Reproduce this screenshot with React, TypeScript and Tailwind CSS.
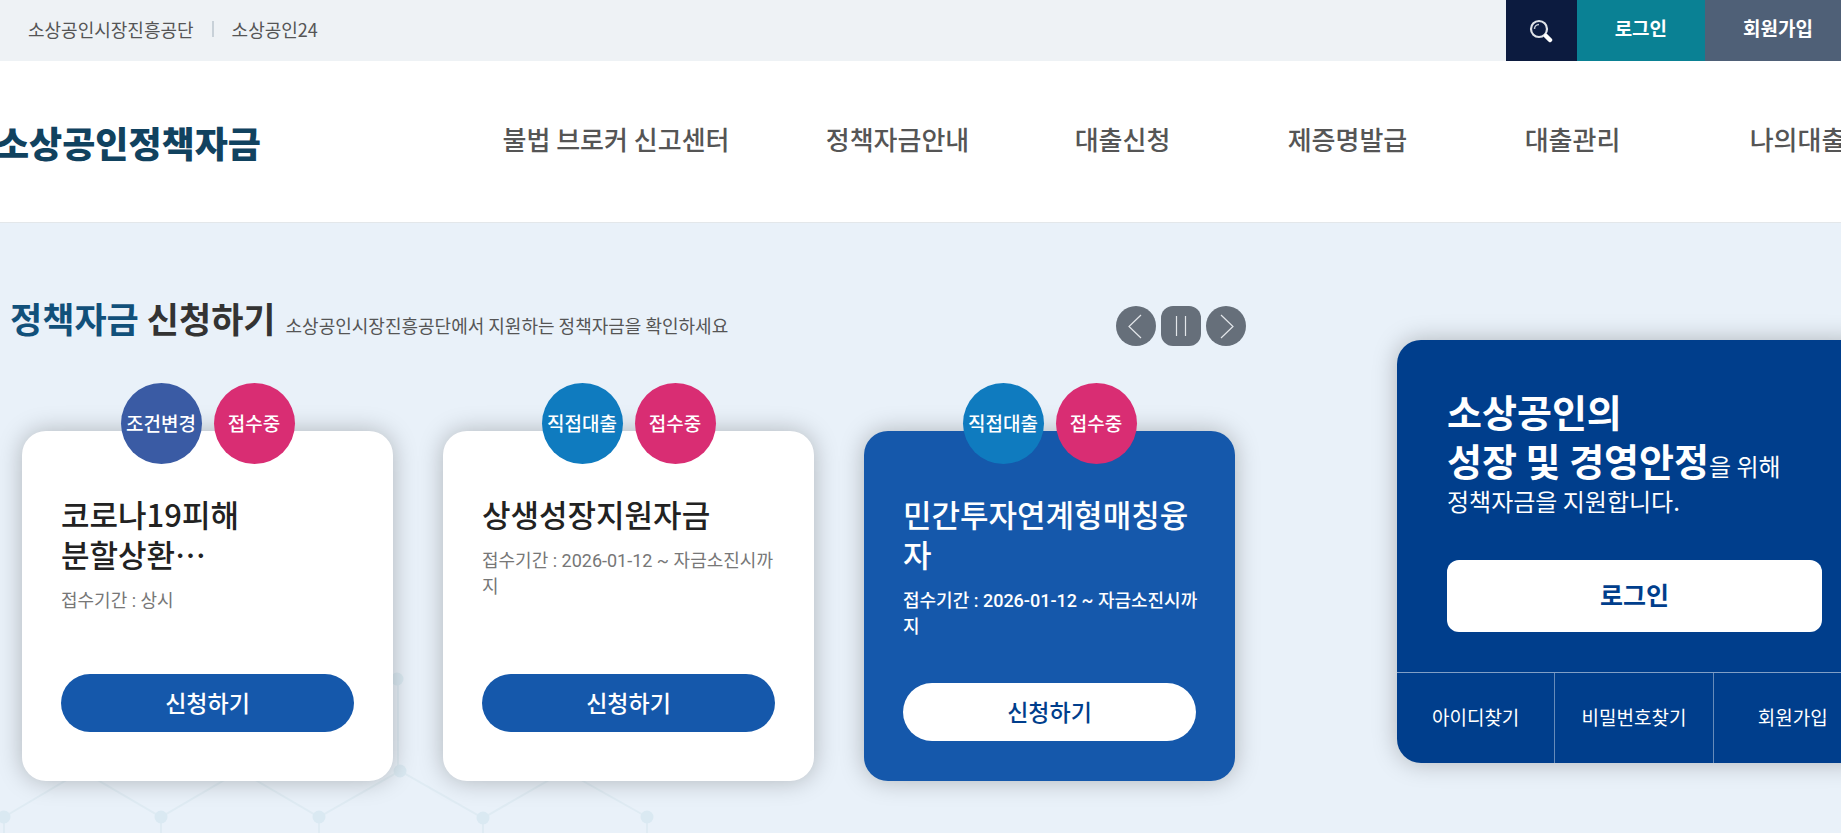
type Loan = {
  type: string
  typeClass: string
  title: string
  period: string
  active?: boolean
}

const menus = ['불법 브로커 신고센터', '정책자금안내', '대출신청', '제증명발급', '대출관리', '나의대출']

const loans: Loan[] = [
  {
    type: '조건변경',
    typeClass: 'bg-[#3a5ba4]',
    title: '코로나19피해\n분할상환…',
    period: '접수기간 : 상시',
  },
  {
    type: '직접대출',
    typeClass: 'bg-[#0f7bbf]',
    title: '상생성장지원자금',
    period: '접수기간 : 2026-01-12 ~ 자금소진시까지',
  },
  {
    type: '직접대출',
    typeClass: 'bg-[#0f7bbf]',
    title: '민간투자연계형매칭융자',
    period: '접수기간 : 2026-01-12 ~ 자금소진시까지',
    active: true,
  },
]

export default function App() {
  return (
    <div className="min-h-screen overflow-hidden bg-[#e9f1f9] font-['Noto_Sans_CJK_KR',sans-serif] text-[#333]">
      <TopBar />
      <Header />
      <main className="relative min-h-[calc(100vh-223px)] overflow-hidden">
        <Pattern />
        <div className="relative -mr-[31px] flex items-start">
          <ApplySection />
          <LoginPanel />
        </div>
      </main>
    </div>
  )
}

function TopBar() {
  return (
    <div className="flex h-[61px] items-stretch justify-between bg-[#eef2f5]">
      <div className="flex items-center gap-[18px] pb-1 pl-7 text-lg text-[#555]">
        <a href="#semas">소상공인시장진흥공단</a>
        <span className="h-4 w-0.5 bg-[#c8d1d8]" />
        <a href="#sbiz24">소상공인24</a>
      </div>
      <div className="flex text-[19px] font-bold text-white">
        <button aria-label="검색" className="flex w-[71px] items-center justify-center bg-[#0c1b3f]">
          <svg width="24" height="24" viewBox="0 0 24 24" fill="none">
            <circle cx="10" cy="10" r="8" stroke="#dfe3e8" strokeWidth="2.200" />
            <path d="M5.500 10a4.500 4.500 0 0 1 4.500-4.500" stroke="#c3c9d3" strokeWidth="1.500" />
            <path d="M17 17l4 4" stroke="#fff" strokeWidth="4.500" strokeLinecap="round" />
          </svg>
        </button>
        <button className="bg-[#0a8194] px-[38px] pb-1">로그인</button>
        <button className="bg-[#4f6077] pr-7 pb-1 pl-[38px]">회원가입</button>
      </div>
    </div>
  )
}

function Header() {
  return (
    <header className="flex h-[162px] border-b border-[#e3e7ea] bg-white">
      <h1 className="-ml-1 flex w-[451px] shrink-0 items-center text-4xl font-black text-[#11425f]">
        <a href="#home">소상공인정책자금</a>
      </h1>
      <nav className="grid shrink-0 grid-cols-[338px_repeat(5,225px)] items-center pb-1.5 text-center text-[26px] font-medium text-[#555]">
        {menus.map((menu) => (
          <a key={menu} href="#menu">
            {menu}
          </a>
        ))}
      </nav>
    </header>
  )
}

function ApplySection() {
  return (
    <section className="min-w-0 flex-1 pt-[71px] pb-12">
      <div className="flex items-end justify-between pl-2.5">
        <div className="flex items-baseline gap-2.5 pb-1">
          <h2 className="text-[35px] leading-[48px] font-bold">
            <span className="text-[#11507a]">정책자금</span> 신청하기
          </h2>
          <p className="text-lg text-[#555]">
            소상공인시장진흥공단에서 지원하는 정책자금을 확인하세요
          </p>
        </div>
        <div className="flex gap-[5px]">
          <ControlButton label="이전" path="M25 9L13 20.500L25 32" />
          <ControlButton label="정지" path="M15.500 10V30M24.500 10V30" square />
          <ControlButton label="다음" path="M15 9L27 20.500L15 32" />
        </div>
      </div>
      <div className="mt-[85px] grid grid-cols-3 gap-[50px] pr-[11px] pl-[22px]">
        {loans.map((loan) => (
          <LoanCard key={loan.title} loan={loan} />
        ))}
      </div>
    </section>
  )
}

function ControlButton({ label, path, square }: { label: string; path: string; square?: boolean }) {
  return (
    <button aria-label={label} className={`size-10 bg-[#666f7a] ${square ? 'rounded-xl' : 'rounded-full'}`}>
      <svg width="40" height="40" viewBox="0 0 40 40" fill="none" stroke="#e3e6ea" strokeWidth="1.200">
        <path d={path} />
      </svg>
    </button>
  )
}

function LoanCard({ loan }: { loan: Loan }) {
  const { type, typeClass, title, period, active } = loan

  return (
    <article
      className={`relative flex flex-col rounded-3xl px-[39px] pt-[63px] pb-10 shadow-[0_0_25px_rgba(0,0,0,0.25)] ${
        active ? 'bg-[#1558ab] text-white' : 'bg-white text-[#222]'
      }`}
    >
      <div className="absolute inset-x-0 -top-12 flex justify-center gap-3 text-[19px] font-medium text-white">
        <span className={`flex size-[81px] items-center justify-center rounded-full ${typeClass}`}>{type}</span>
        <span className="flex size-[81px] items-center justify-center rounded-full bg-[#d92d73]">접수중</span>
      </div>
      <div className="min-h-[137px]">
        <h3 className="text-[31px] leading-10 font-medium whitespace-pre-line">{title}</h3>
        <p
          className={`mt-3.5 -mr-1 font-[Roboto,'Noto_Sans_CJK_KR',sans-serif] text-lg leading-[26px] ${
            active ? 'font-medium' : 'text-[#777]'
          }`}
        >
          {period}
        </p>
      </div>
      <button
        className={`mt-[43px] h-[58px] w-full rounded-full pb-0.5 text-[23px] font-medium ${
          active ? 'bg-white text-[#003e8c]' : 'bg-[#1558ab] text-white'
        }`}
      >
        신청하기
      </button>
    </article>
  )
}

function LoginPanel() {
  return (
    <aside className="mt-[117px] ml-[151px] w-[475px] shrink-0 rounded-3xl bg-[#003e8c] text-white shadow-[0_0_25px_rgba(0,0,0,0.25)]">
      <div className="px-[50px] pt-[46px] pb-10">
        <p className="text-2xl leading-[34px]">
          <strong className="text-[38px] leading-[49px] font-bold">
            소상공인의
            <br />
            성장 및 경영안정
          </strong>
          을 위해
          <br />
          정책자금을 지원합니다.
        </p>
        <button className="mt-[42px] h-[72px] w-full rounded-xl bg-white pb-0.5 text-[25px] font-bold text-[#003e8c]">
          로그인
        </button>
      </div>
      <div className="grid h-[91px] grid-cols-3 divide-x divide-white/40 border-t border-white/50 text-center text-[19px]">
        <a href="#find-id" className="flex items-center justify-center pb-0.5">아이디찾기</a>
        <a href="#find-pw" className="flex items-center justify-center pb-0.5">비밀번호찾기</a>
        <a href="#join" className="flex items-center justify-center pb-0.5">회원가입</a>
      </div>
    </aside>
  )
}

// faint molecule pattern behind the cards
function Pattern() {
  const dots = [
    [4, 594],
    [161, 594],
    [319, 594],
    [483, 595],
    [647, 594],
    [397, 456],
    [400, 548],
  ]

  return (
    <svg className="absolute top-0 left-0" width="700" height="620" viewBox="0 0 700 620" fill="none">
      <path
        d="M4 594L82 548L161 594L240 548L319 594L400 548L483 595L565 548L647 594M4 594V620M161 594V620M319 594V620M483 595V620M647 594V620M398 456V548"
        stroke="#dfebf3"
        strokeWidth="2"
      />
      {dots.map(([x, y]) => (
        <circle key={`${x}-${y}`} cx={x} cy={y} r="6.500" fill="#dae9f2" />
      ))}
    </svg>
  )
}
